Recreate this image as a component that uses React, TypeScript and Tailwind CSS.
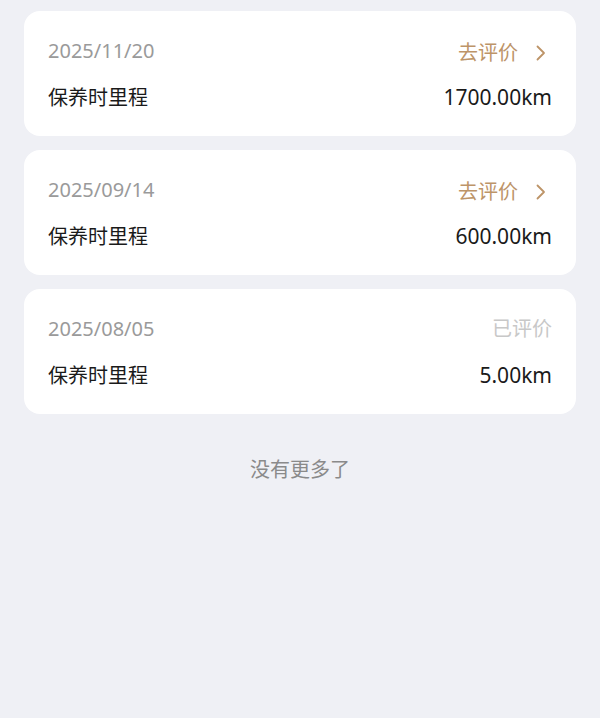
type Record = {
  date: string;
  mileage: string;
  rated: boolean;
};

const records: Record[] = [
  { date: "2025/11/20", mileage: "1700.00km", rated: false },
  { date: "2025/09/14", mileage: "600.00km", rated: false },
  { date: "2025/08/05", mileage: "5.00km", rated: true },
];

const font = {
  fontFamily: '"Noto Sans", "Noto Sans CJK SC", sans-serif',
};

function Chevron() {
  return (
    <svg width="10" height="16" viewBox="0 0 10 16" fill="none" className="ml-[18px] mr-[6px]">
      <path d="M1.5 1.5 L8 8 L1.5 14.5" stroke="currentColor" strokeWidth="1.8" strokeLinecap="round" strokeLinejoin="round" />
    </svg>
  );
}

function RecordCard({ record }: { record: Record }) {
  return (
    <div className="bg-white rounded-[16px] px-6 pt-[26px] pb-[24px]">
      <div className="flex items-center justify-between h-[28px]">
        <span className="text-[20px] text-[#9a9a9a]">{record.date}</span>
        {record.rated ? (
          <span className="text-[20px] text-[#c8c8c8]">已评价</span>
        ) : (
          <span className="flex items-center text-[20px] text-[#bd9468] translate-y-[2px]">
            去评价
            <Chevron />
          </span>
        )}
      </div>
      <div className="flex items-center justify-between h-[28px] mt-[19px]">
        <span className="text-[20px] text-[#1a1a1a]">保养时里程</span>
        <span className="text-[21px] text-[#1a1a1a]">{record.mileage}</span>
      </div>
    </div>
  );
}

export default function App() {
  return (
    <div className="min-h-[718px] bg-[#eff0f5] px-6 pt-[11px]" style={font}>
      <div className="flex flex-col gap-[14px]">
        {records.map((r) => (
          <RecordCard key={r.date} record={r} />
        ))}
      </div>
      <div className="text-center text-[20px] text-[#8a8a8a] mt-[41px]">没有更多了</div>
    </div>
  );
}
